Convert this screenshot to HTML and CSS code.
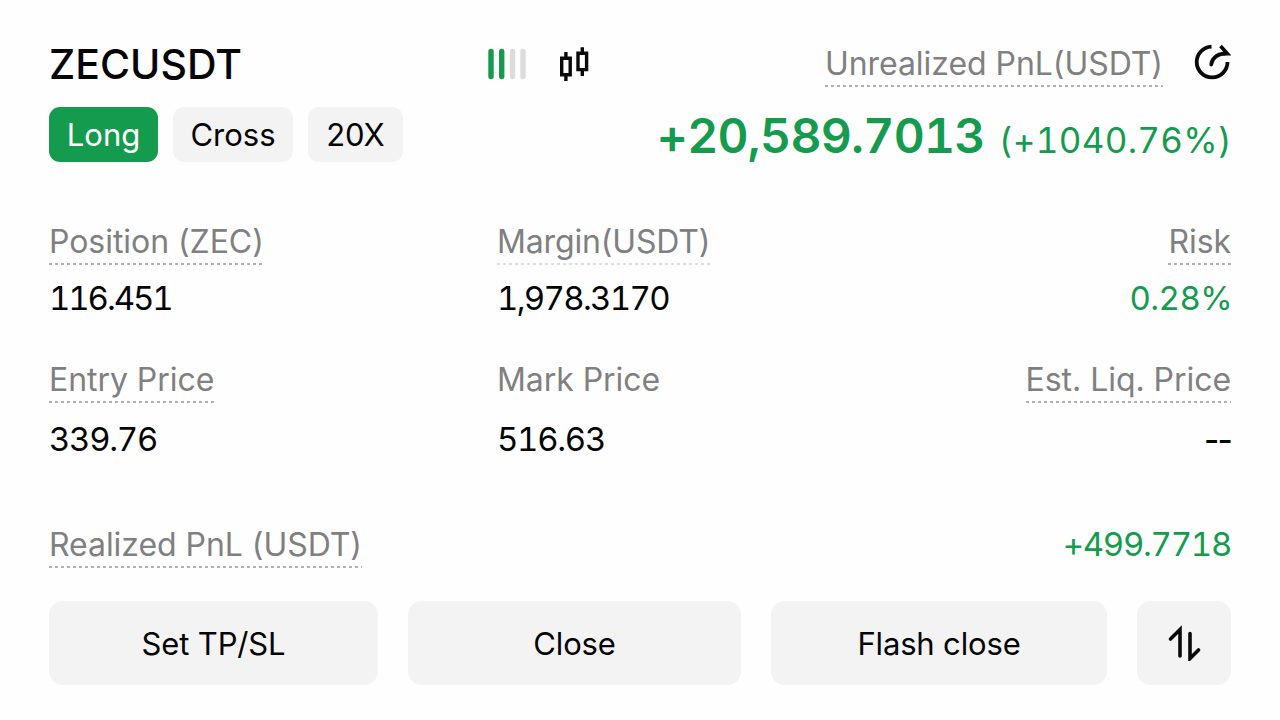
FILE: index.html
```html
<!DOCTYPE html>
<html lang="en">
<head>
    <meta charset="UTF-8">
    <meta name="viewport" content="width=device-width, initial-scale=1.0">
    <title>ZECUSDT Position</title>
    <link rel="stylesheet" href="styles.css">
</head>
<body>
    <div class="card">
        <div class="header">
            <div class="header-left">
                <h1 class="symbol">ZECUSDT</h1>
                <div class="tags">
                    <span class="tag tag-long">Long</span>
                    <span class="tag tag-cross">Cross</span>
                    <span class="tag tag-lever">20X</span>
                </div>
            </div>
            <div class="header-icons">
                <svg class="icon-bars" width="40" height="34" viewBox="0 0 40 34" stroke-width="5.4" stroke-linecap="round">
                    <path d="M4 3.500v25M14.700 3.500v25" stroke="#159b4e"/>
                    <path d="M25.500 3.500v25M36 3.500v25" stroke="#dcdcdc"/>
                </svg>
                <svg class="icon-candles" width="32" height="36" viewBox="0 0 32 36" fill="none" stroke="#0a0a0a" stroke-width="3.4">
                    <path d="M3.700 12.200h8.500v16.600H3.700zM7.900 6v6M7.900 29v6M20 7.200h8.600v16.400H20zM24.300 1.200v6M24.300 24v6"/>
                </svg>
            </div>
            <div class="header-right">
                <div class="pnl-title">
                    <span class="label dotted">Unrealized PnL(USDT)</span>
                    <svg class="icon-share" width="38" height="38" viewBox="0 0 38 38" fill="none" stroke="#0a0a0a" stroke-width="3.8">
                        <path d="M18.500 3.600A15.400 15.400 0 1 0 34.500 19" stroke-linecap="butt"/>
                        <path d="M18.300 21.500C18.600 16.500 23 11 32 10.500" stroke-linecap="round"/>
                        <path d="M27.500 3L34.500 10.800H29" stroke-width="3.600"/>
                    </svg>
                </div>
                <div class="pnl">
                    <span class="pnl-value">+20,589.7013</span>
                    <span class="pnl-rate">(+1040.76%)</span>
                </div>
            </div>
        </div>

        <div class="grid row-first">
            <div class="cell">
                <span class="label dotted">Position (ZEC)</span>
                <span class="value size">116.451</span>
            </div>
            <div class="cell">
                <span class="label dotted faint">Margin(USDT)</span>
                <span class="value margin">1,978.3170</span>
            </div>
            <div class="cell right">
                <span class="label dotted">Risk</span>
                <span class="value green risk">0.28%</span>
            </div>
        </div>

        <div class="grid row-second">
            <div class="cell">
                <span class="label dotted">Entry Price</span>
                <span class="value">339.76</span>
            </div>
            <div class="cell">
                <span class="label">Mark Price</span>
                <span class="value">516.63</span>
            </div>
            <div class="cell right">
                <span class="label dotted">Est. Liq. Price</span>
                <span class="value empty">--</span>
            </div>
        </div>

        <div class="realized">
            <span class="label dotted">Realized PnL (USDT)</span>
            <span class="value green">+499.7718</span>
        </div>

        <div class="actions">
            <button class="btn">Set TP/SL</button>
            <button class="btn">Close</button>
            <button class="btn">Flash close</button>
            <button class="btn" aria-label="Reverse">
                <svg width="34" height="36" viewBox="0 0 34 36" fill="none" stroke="#0a0a0a" stroke-width="3.6">
                    <path d="M3.500 14L13 4.500V31" stroke-linecap="round"/>
                    <path d="M23 8.500V33.500L31.500 25" stroke-linecap="round"/>
                </svg>
            </button>
        </div>
    </div>
</body>
</html>
```

FILE: styles.css
```css
* {
    box-sizing: border-box;
}
body {
    margin: 0;
    background-color: #fefefe;
    color: #050505;
    font-family: Inter, sans-serif;
}
.card {
    width: 1280px;
    height: 720px;
    padding: 40px 49px 0;
    overflow: hidden;
}
.header {
    display: grid;
    grid-template-columns: 438px 120px 1fr;
    height: 180px;
}
.symbol {
    margin: 0;
    font-size: 41px;
    font-weight: 540;
    line-height: 48px;
}
.tags {
    display: flex;
    gap: 15px;
    margin-top: 19px;
}
.tag {
    height: 55px;
    border-radius: 11px;
    background-color: #f3f3f3;
    font-size: 31px;
    line-height: 56px;
    text-align: center;
    white-space: nowrap;
}
.tag-long {
    width: 109px;
    background-color: #159b4e;
    color: #fff;
}
.tag-cross {
    width: 120px;
}
.tag-lever {
    width: 95px;
}
.header-icons {
    display: flex;
    align-items: flex-start;
    gap: 31px;
    padding-top: 6px;
}
.icon-bars {
    margin-top: 2px;
    flex: none;
}
.icon-candles {
    flex: none;
}
.header-right {
    display: flex;
    flex-direction: column;
    align-items: flex-end;
}
.pnl-title {
    display: flex;
    align-items: flex-start;
    gap: 30px;
    padding-top: 2px;
}
.icon-share {
    margin-top: 1px;
}
.pnl {
    display: flex;
    align-items: baseline;
    gap: 14px;
    margin-top: 19px;
    color: #159b4e;
    line-height: 60px;
    white-space: nowrap;
    font-variant-numeric: tabular-nums;
}
.pnl-value {
    font-size: 48px;
    font-weight: 570;
    letter-spacing: -0.7px;
}
.pnl-rate {
    margin-right: -1px;
    font-size: 35px;
    letter-spacing: 0.3px;
}
.grid {
    display: grid;
    grid-template-columns: 448px 1fr auto;
}
.cell {
    display: flex;
    flex-direction: column;
    align-items: flex-start;
}
.right {
    align-items: flex-end;
}
.label {
    height: 45px;
    color: #808080;
    font-size: 32px;
    line-height: 43px;
    letter-spacing: -0.05px;
    white-space: nowrap;
}
.dotted {
    background: repeating-linear-gradient(90deg, #b0b0b0 0 3px, transparent 3px 6px) left bottom / 100% 2px no-repeat;
}
.faint {
    background-image: repeating-linear-gradient(90deg, #dedede 0 3px, transparent 3px 6px);
    letter-spacing: -0.15px;
}
.value {
    font-size: 33px;
    line-height: 40px;
    letter-spacing: -1.3px;
    white-space: nowrap;
    font-variant-numeric: tabular-nums;
}
.size {
    letter-spacing: -2.1px;
}
.margin {
    letter-spacing: -1.7px;
}
.risk {
    margin-right: -1px;
    letter-spacing: -0.6px;
}
.empty {
    padding-top: 1px;
    font-weight: 500;
    letter-spacing: -1.7px;
    font-variant-numeric: normal;
}
.green {
    color: #159b4e;
}
.row-first {
    height: 138px;
}
.row-first .value {
    margin-top: 13px;
}
.row-second {
    height: 165px;
}
.row-second .value {
    margin-top: 16px;
}
.realized {
    display: flex;
    justify-content: space-between;
    height: 78px;
}
.realized .value {
    line-height: 42px;
}
.actions {
    display: grid;
    grid-template-columns: 329px 333px 336px 94px;
    justify-content: space-between;
}
.btn {
    display: flex;
    align-items: center;
    justify-content: center;
    height: 84px;
    padding: 0;
    border: none;
    border-radius: 14px;
    background-color: #f3f3f3;
    color: #050505;
    font-family: inherit;
    font-size: 31px;
    letter-spacing: -0.15px;
    cursor: pointer;
}
```
